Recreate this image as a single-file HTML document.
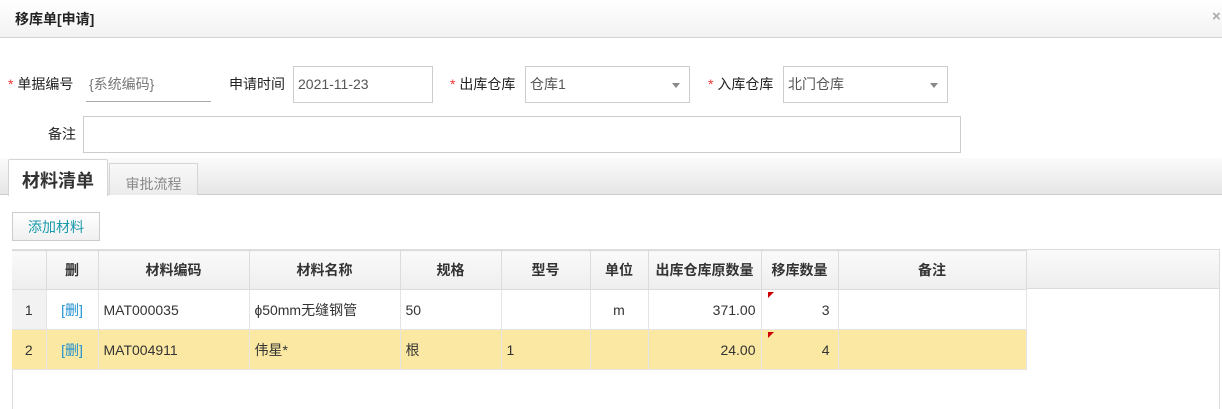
<!DOCTYPE html>
<html><head><meta charset="utf-8"><style>
*{box-sizing:border-box;margin:0;padding:0}
body{width:1222px;height:407px;overflow:hidden;background:#fff;font-family:"Liberation Sans","Noto Sans CJK SC",sans-serif;font-size:14px;color:#333;position:relative}
.a{position:absolute}
.hd{left:0;top:0;width:1222px;height:38px;background:linear-gradient(#fff,#f2f2f2);border-bottom:1px solid #d3d3d3}
.lbl{font-size:14px;color:#222;line-height:20px}
.star{color:#e33}
.inp{border:1px solid #ccc;height:37px;background:#fff;color:#555;line-height:35px;padding-left:4px;font-size:14px}
.arr{position:absolute;right:9px;top:16px;width:0;height:0;border-left:4px solid transparent;border-right:4px solid transparent;border-top:5px solid #888}
table{border-collapse:collapse;table-layout:fixed}
td,th{border:1px solid #e4e4e4;height:40px;font-size:14px;padding:0 5px;white-space:nowrap;overflow:hidden}
th{background:linear-gradient(#fafafa,#eee);font-weight:bold;color:#333;border-color:#dcdcdc;height:39px}
.y td{background:#fbe8a3}
.lk{color:#1b8fd0}
.tri{position:relative}
.tri:before{content:"";position:absolute;left:6px;top:2px;border-top:6px solid #c00;border-right:6px solid transparent}
</style></head><body>
<div class="a hd"></div>
<div class="a" style="left:15px;top:9px;font-weight:bold;font-size:14px;color:#222">移库单[申请]</div>
<div class="a" style="left:1212px;top:8px;color:#aaa;font-size:15px;font-weight:bold">×</div>

<div class="a lbl" style="left:8px;top:74px"><span class="star">*</span> 单据编号</div>
<div class="a" style="left:86px;top:66px;width:125px;height:36px;border-bottom:1px solid #aaa;color:#777;line-height:36px;padding-left:3px">{系统编码}</div>
<div class="a lbl" style="left:229px;top:74px">申请时间</div>
<div class="a inp" style="left:293px;top:66px;width:140px">2021-11-23</div>
<div class="a lbl" style="left:450px;top:74px"><span class="star">*</span> 出库仓库</div>
<div class="a inp" style="left:525px;top:66px;width:165px">仓库1<div class="arr"></div></div>
<div class="a lbl" style="left:708px;top:74px"><span class="star">*</span> 入库仓库</div>
<div class="a inp" style="left:783px;top:66px;width:165px">北门仓库<div class="arr"></div></div>
<div class="a lbl" style="left:48px;top:124px">备注</div>
<div class="a inp" style="left:83px;top:116px;width:878px"></div>

<div class="a" style="left:0;top:158px;width:1222px;height:37px;background:linear-gradient(#fbfbfb,#e6e6e6);border-bottom:1px solid #ccc"></div>
<div class="a" style="left:8px;top:159px;width:100px;height:37px;background:#fff;border:1px solid #d5d5d5;border-bottom:none;border-radius:2px 2px 0 0;font-weight:bold;font-size:18px;color:#333;text-align:center;line-height:42px">材料清单</div>
<div class="a" style="left:109px;top:163px;width:89px;height:32px;background:linear-gradient(#f8f8f8,#ececec);border:1px solid #d5d5d5;border-bottom:none;color:#888;text-align:center;line-height:40px;font-size:14px">审批流程</div>

<div class="a" style="left:12px;top:212px;width:88px;height:29px;border:1px solid #ccc;background:linear-gradient(#fff,#f0f0f0);color:#1a9aaa;text-align:center;line-height:28px">添加材料</div>

<div class="a" style="left:12px;top:249px;width:1208px;height:160px;border:1px solid #ddd;border-bottom:none"></div>
<div class="a" style="left:13px;top:250px;width:1206px;height:39px;background:linear-gradient(#fafafa,#eee);border-bottom:1px solid #dcdcdc"></div>
<table class="a" style="left:12px;top:250px">
<colgroup><col style="width:34px"><col style="width:52px"><col style="width:151px"><col style="width:151px"><col style="width:101px"><col style="width:89px"><col style="width:58px"><col style="width:113px"><col style="width:77px"><col style="width:188px"></colgroup>
<tr><th style="border-left:none"></th><th>删</th><th>材料编码</th><th>材料名称</th><th>规格</th><th>型号</th><th>单位</th><th style="padding:0 2px">出库仓库原数量</th><th>移库数量</th><th>备注</th></tr>
<tr><td style="background:#f2f2f2;text-align:center;border-left:none">1</td><td class="lk" style="text-align:center">[删]</td><td>MAT000035</td><td>ɸ50mm无缝钢管</td><td>50</td><td></td><td style="text-align:center">m</td><td style="text-align:right">371.00</td><td class="tri" style="text-align:right;padding-right:8px">3</td><td></td></tr>
<tr class="y"><td style="text-align:center;border-left:none">2</td><td class="lk" style="text-align:center">[删]</td><td>MAT004911</td><td>伟星*</td><td>根</td><td>1</td><td></td><td style="text-align:right">24.00</td><td class="tri" style="text-align:right;padding-right:8px">4</td><td></td></tr>
</table>
</body></html>
